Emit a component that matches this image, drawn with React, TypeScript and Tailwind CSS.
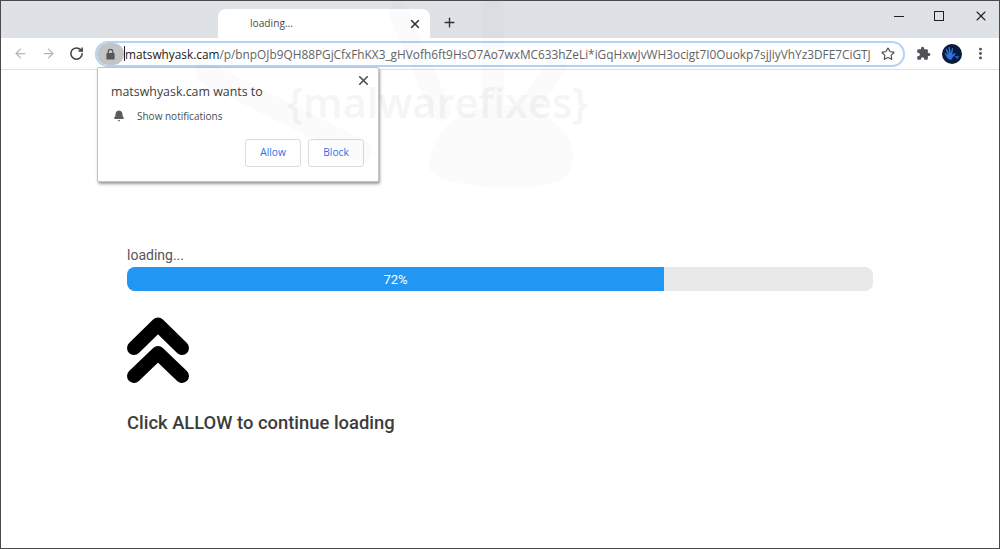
import { useState } from "react";
import { ArrowLeft, ArrowRight, Bell, MoreVertical, Plus, RotateCw, Star, X } from "lucide-react";

const url =
  "/p/bnpOJb9QH88PGjCfxFhKX3_gHVofh6ft9HsO7Ao7wxMC633hZeLi*iGqHxwJvWH3ocigt7I0Ouokp7sjJiyVhYz3DFE7CiGTJ";

const Puzzle = () => (
  <svg viewBox="0 0 24 24" className="w-[15px] h-[15px] fill-[#4f5256]">
    <path d="M20.5 11H19V7a2 2 0 0 0-2-2h-4V3.5a2.5 2.5 0 0 0-5 0V5H4a2 2 0 0 0-2 2v3.8h1.5a2.7 2.7 0 0 1 0 5.4H2V20a2 2 0 0 0 2 2h3.8v-1.5a2.7 2.7 0 0 1 5.4 0V22H17a2 2 0 0 0 2-2v-4h1.5a2.5 2.5 0 0 0 0-5z" />
  </svg>
);

const Avatar = () => (
  <div className="w-[20px] h-[20px] rounded-full bg-[#0a1a3c] overflow-hidden">
    <svg viewBox="0 0 20 20" className="w-[20px] h-[20px]">
      <path
        d="M6 15L2.500 9.500l1-.5 2.500 2.500L3.500 5l1.200-.5 2.300 5L6.500 3l1.300 0 1 6L10 4l1.200.5-1 6 3-1.500.5 1-3.500 4-1 2z"
        fill="#2f6fe0"
      />
      <path d="M13 12h4v1.500h-1.200V15H14.500v-1.500H13z" fill="#2a5cb8" />
    </svg>
  </div>
);

const Watermark = () => (
  <div className="absolute left-0 top-0 w-[1000px] h-[200px] pointer-events-none">
    <svg viewBox="0 0 1000 200" className="absolute inset-0 w-full h-full opacity-[0.012]">
      <g stroke="#000" strokeLinecap="round" fill="none">
        <path d="M205 72L360 150" strokeWidth="22" />
        <path d="M398 12L440 110" strokeWidth="20" />
        <path d="M492 8L492 100" strokeWidth="22" />
        <path d="M556 62L520 120" strokeWidth="20" />
      </g>
      <path d="M428 160c8-40 50-62 90-54 40 8 62 36 52 62-8 18-50 22-84 18-32-4-62-8-58-26z" fill="#000" />
    </svg>
    <div className="absolute left-[286px] top-[73px] text-[41.6px] leading-[56px] font-['Open_Sans',sans-serif] font-semibold text-black opacity-[0.035] whitespace-nowrap">
      {"{malwarefixes}"}
    </div>
  </div>
);

const Popup = () => (
  <div className="absolute left-[96px] top-[66px] w-[282px] h-[115px] bg-white border border-[#c4c4c4] rounded-[2px] shadow-[1px_2px_3px_rgba(0,0,0,0.4)] font-['Open_Sans',sans-serif]">
    <X className="absolute right-[7px] top-[5px] w-[15px] h-[15px] text-[#4a4d50]" strokeWidth={2.6} />
    <div className="pl-[13px] pt-[15px] text-[12.4px] leading-[18px] text-[#3c4043] whitespace-nowrap">
      matswhyask.cam wants to
    </div>
    <div className="flex items-center pl-[15px] pt-[6px] h-[24px]">
      <Bell className="w-[12px] h-[12px] fill-[#5a5d60] text-[#5a5d60]" />
      <span className="ml-[12px] text-[10px] text-[#4a4d50] whitespace-nowrap">Show notifications</span>
    </div>
    <div className="flex justify-end gap-[7px] pr-[14px] pt-[14px]">
      <button className="w-[56px] h-[28px] border border-[#dadce0] rounded-[3px] text-[10.2px] font-medium text-[#2f6fe8]">
        Allow
      </button>
      <button className="w-[56px] h-[28px] border border-[#dadce0] rounded-[3px] text-[10.2px] font-medium text-[#2f6fe8]">
        Block
      </button>
    </div>
  </div>
);

const App = () => {
  const [progress] = useState(72);

  return (
    <div className="relative w-[1000px] h-[549px] bg-white overflow-hidden flex flex-col border border-[#4a4a4a] font-['Roboto',sans-serif]">
      {/* tab strip */}
      <div className="h-[37px] shrink-0 bg-[#dee1e6] flex items-end">
        <div className="ml-[217px] w-[212px] h-[29px] bg-white rounded-t-[8px] flex items-center pl-[32px] pr-[8px] font-['Open_Sans',sans-serif]">
          <span className="text-[10.2px] text-[#4a4d50]">loading...</span>
          <X className="ml-auto w-[14px] h-[14px] text-[#303336]" strokeWidth={2.6} />
        </div>
        <Plus className="ml-[12px] mb-[8px] w-[15px] h-[15px] text-[#303336]" strokeWidth={2.2} />
        <div className="ml-auto self-start flex items-center gap-[30px] pt-[7px] pr-[16px]">
          <div className="w-[10px] h-[12px] flex items-center">
            <div className="w-full h-px bg-[#202124]" />
          </div>
          <div className="w-[10px] h-[10px] border border-[#202124]" />
          <X className="w-[16px] h-[16px] -ml-[1px] -mr-[6px] text-[#202124]" strokeWidth={1.6} />
        </div>
      </div>

      {/* toolbar */}
      <div className="h-[32px] shrink-0 bg-white border-b border-[#dfe1e5] flex items-center">
        <ArrowLeft className="ml-[12px] w-[15px] h-[15px] text-[#b4b7ba]" strokeWidth={2} />
        <ArrowRight className="ml-[13px] w-[15px] h-[15px] text-[#b4b7ba]" strokeWidth={2} />
        <RotateCw className="ml-[13px] w-[15px] h-[15px] text-[#3f4245]" strokeWidth={2.4} />
        <div className="ml-[11px] w-[810px] h-[26px] rounded-full border-2 border-[#b5d2f3] flex items-center overflow-hidden font-['Open_Sans',sans-serif]">
          <div className="w-[27px] h-[22px] shrink-0 rounded-full bg-[#c4c4c4] flex items-center justify-center">
            <svg viewBox="0 0 12 13" className="w-[11px] h-[12px]">
              <path d="M3.500 6V4a2.500 2.500 0 0 1 5 0v2" fill="none" stroke="#55585b" strokeWidth="1.400" />
              <rect x="1.500" y="5.500" width="9" height="7" rx="1" fill="#55585b" />
            </svg>
          </div>
          <div className="w-px h-[15px] bg-[#202124] shrink-0" />
          <div className="w-[745px] shrink-0 overflow-hidden whitespace-nowrap text-[11.83px] leading-[22px]">
            <span className="text-[#202124]">matswhyask.cam</span>
            <span className="text-[#5f6368]">{url}</span>
          </div>
          <Star className="ml-[11px] w-[14px] h-[14px] shrink-0 text-[#4a4d50]" strokeWidth={2} />
        </div>
        <div className="ml-[11px]">
          <Puzzle />
        </div>
        <div className="ml-[11px]">
          <Avatar />
        </div>
        <MoreVertical className="ml-[11px] w-[15px] h-[15px] text-[#4a4d50]" strokeWidth={2.6} />
      </div>

      {/* page */}
      <main className="flex-1 px-[126px] pt-[174px]">
        <div className="text-[14px] leading-[22px] text-[#555555]">loading...</div>
        <div className="mt-[1px] h-[24px] w-[746px] rounded-[8px] bg-[#e9e9e9] overflow-hidden">
          <div
            className="h-full bg-[#2196f3] text-white text-[13px] leading-[25px] text-center"
            style={{ width: `${progress}%` }}
          >
            {progress}%
          </div>
        </div>
        <svg viewBox="0 0 62 66" className="mt-[26px] w-[62px] h-[66px]">
          <path
            d="M7 31L31 7.500l24 23.500M7 59L31 36l24 23"
            fill="none"
            stroke="#000"
            strokeWidth="14"
            strokeLinecap="round"
            strokeLinejoin="round"
          />
        </svg>
        <h2 className="mt-[26px] text-[18.4px] leading-[28px] font-medium text-[#3c3c3c]">Click ALLOW to continue loading</h2>
      </main>

      <Popup />
      <Watermark />
    </div>
  );
};

export default App;
